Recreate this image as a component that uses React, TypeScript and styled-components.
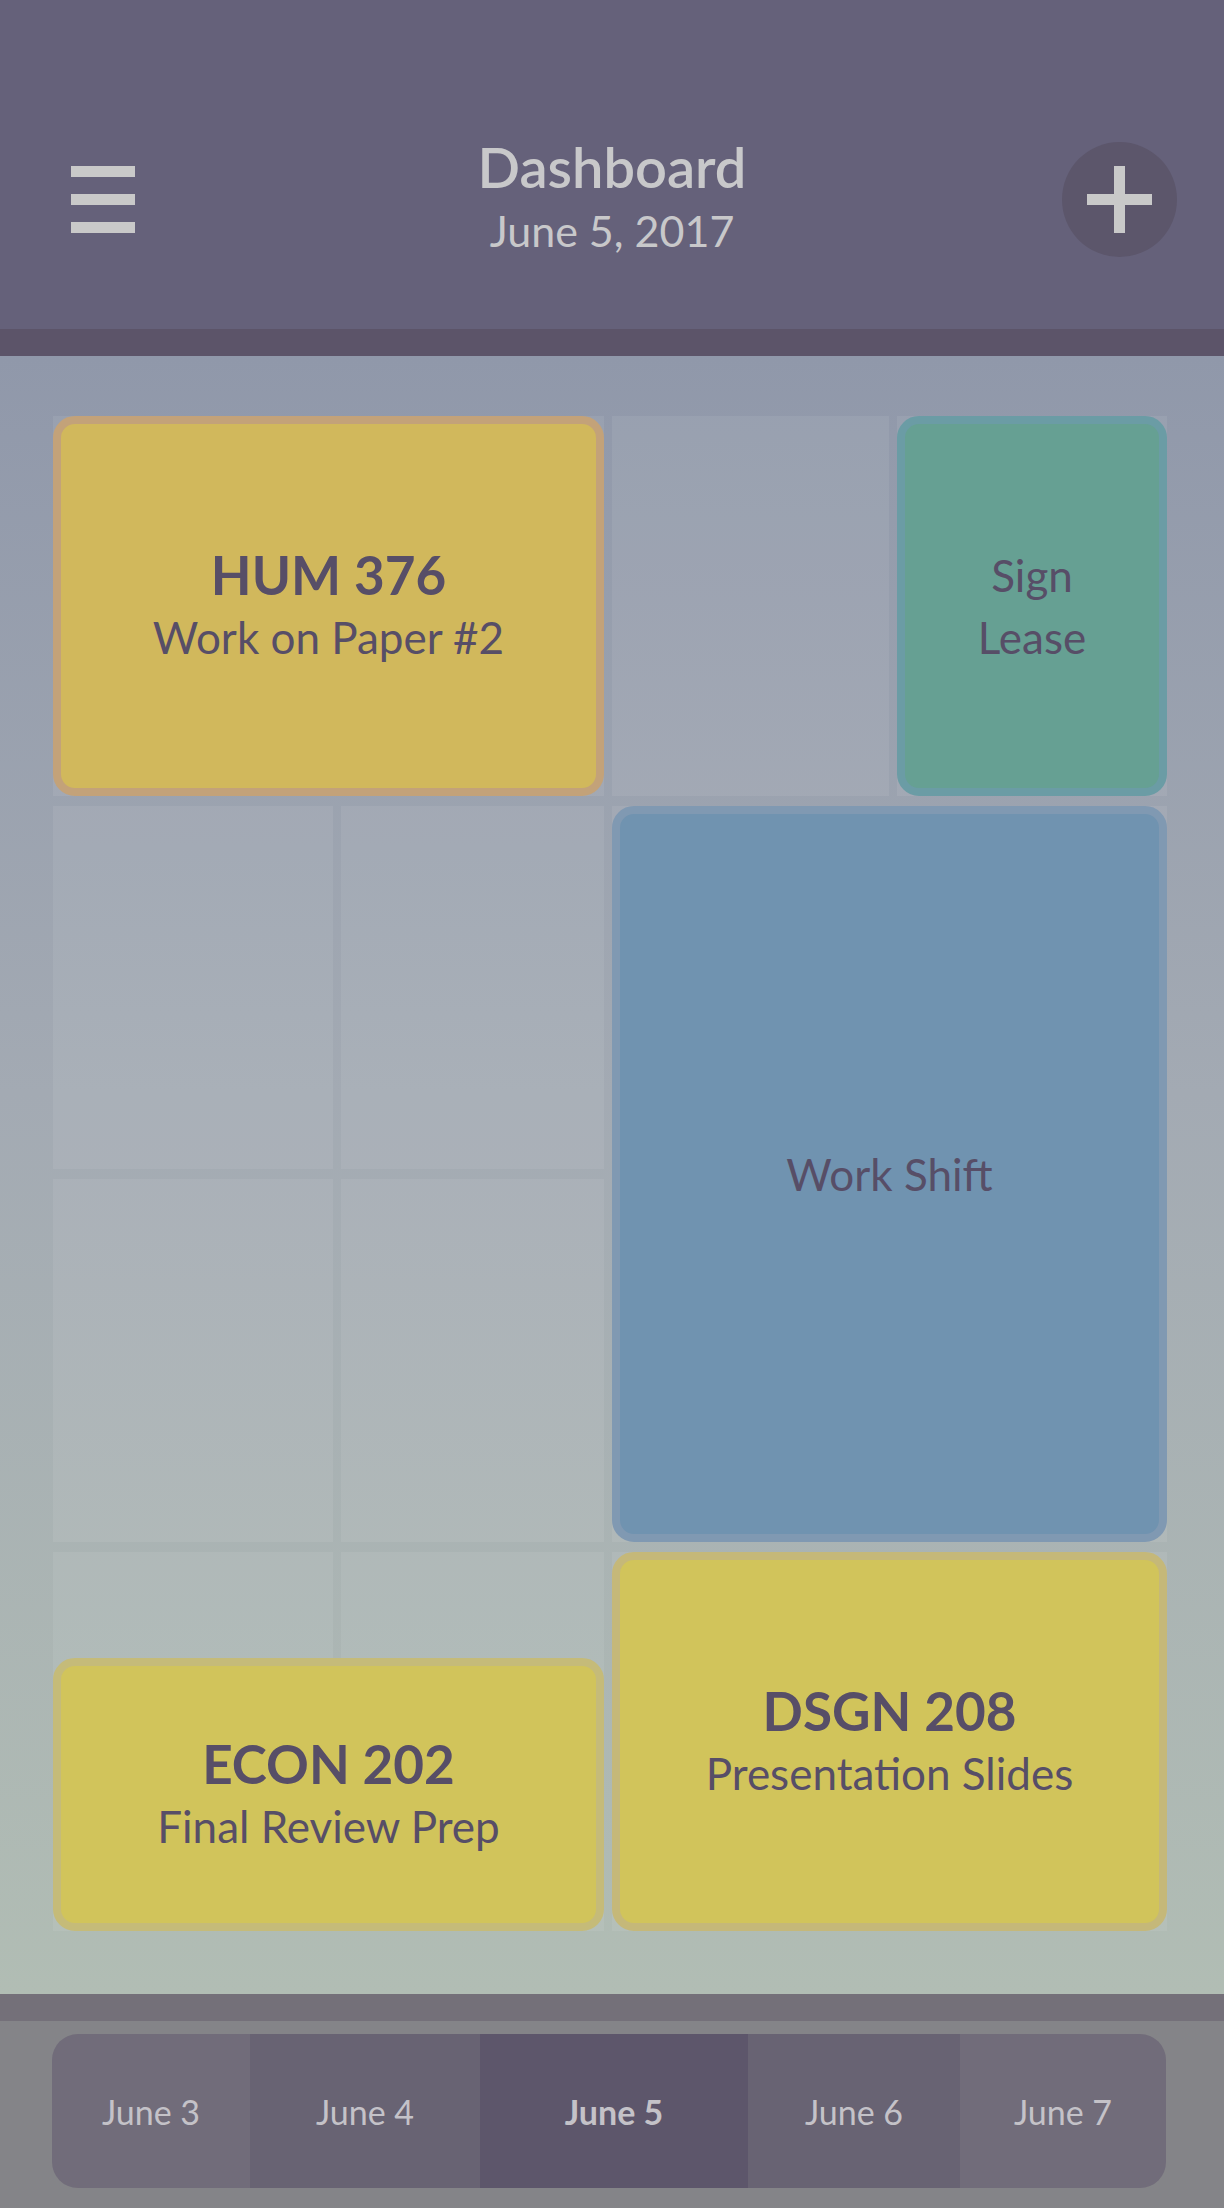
import React, { FC } from 'react';
import styled, { createGlobalStyle } from 'styled-components';

const GlobalStyle = createGlobalStyle`
  html, body {
    margin: 0;
    padding: 0;
  }

  body {
    font-family: Lato, 'Noto Sans', 'Liberation Sans', sans-serif;
    background: #848488;
  }

  * {
    box-sizing: border-box;
  }
`;

const Screen = styled.div`
  width: 1224px;
  height: 2208px;
  display: flex;
  flex-flow: column nowrap;
  overflow: hidden;
`;

// Cabecera
const Header = styled.header`
  background-color: #65617a;
  height: 329px;
  display: flex;
  flex-flow: column nowrap;
`;

const StatusBar = styled.div`
  height: 70px;
`;

const NavBar = styled.nav`
  flex: 1;
  display: grid;
  grid-template-columns: 1fr auto 1fr;
  align-items: center;
  padding: 0 47px;
`;

const MenuButton = styled.button`
  justify-self: start;
  margin-left: 24px;
  display: flex;
  flex-flow: column nowrap;
  gap: 17px;
  padding: 0;
  border: 0;
  background: none;
  width: 64px;
`;

const MenuBar = styled.span`
  display: block;
  height: 11px;
  width: 100%;
  background-color: #c9c9c9;
`;

const TitleBlock = styled.div`
  display: flex;
  flex-flow: column nowrap;
  align-items: center;
  color: #c8c8ca;
  padding-bottom: 4px;
`;

const Title = styled.h1`
  margin: 0;
  font-size: 56px;
  line-height: 60px;
  font-weight: 600;
`;

const Subtitle = styled.p`
  margin: 6px 0 0;
  font-size: 43px;
  line-height: 56px;
  font-weight: 400;
`;

const AddButton = styled.button`
  justify-self: end;
  width: 115px;
  height: 115px;
  border-radius: 50%;
  border: 0;
  padding: 0;
  background-color: #5c566b;
  display: flex;
  align-items: center;
  justify-content: center;
`;

const Strip = styled.div<{ $color: string }>`
  height: 27px;
  background-color: ${(p) => p.$color};
`;

// Calendario
const Main = styled.main`
  height: 1638px;
  padding: 60px 0 0 53px;
  background: linear-gradient(180deg, #9098aa 0%, #a3aab3 45%, #b1bdb4 100%);
`;

const Grid = styled.div`
  height: 1515px;
  display: grid;
  grid-template-columns: 280px 263px 277px 270px;
  grid-template-rows: 380px 363px 363px 379px;
  gap: 10px 8px;
`;

const Cell = styled.div<{ $col: number; $row: number }>`
  grid-column: ${(p) => p.$col};
  grid-row: ${(p) => p.$row};
  background-color: rgba(255, 255, 255, 0.07);
`;

const EventCard = styled.div<{
  $col: string;
  $row: string;
  $fill: string;
  $edge: string;
  $offset?: number;
}>`
  grid-column: ${(p) => p.$col};
  grid-row: ${(p) => p.$row};
  margin-top: ${(p) => p.$offset || 0}px;
  background-color: ${(p) => p.$fill};
  border: 8px solid ${(p) => p.$edge};
  border-radius: 22px;
  display: flex;
  flex-flow: column nowrap;
  align-items: center;
  justify-content: center;
  text-align: center;
  color: #574e67;
  z-index: 1;
`;

const EventTitle = styled.div`
  font-size: 53px;
  line-height: 62px;
  font-weight: 700;
`;

const EventText = styled.div`
  font-size: 44px;
  line-height: 62px;
  font-weight: 400;
`;

// Pie
const Footer = styled.footer`
  flex: 1;
  background-color: #848488;
  padding: 13px 58px 0 52px;
`;

const DayTabs = styled.div`
  display: flex;
  flex-flow: row nowrap;
  height: 154px;
  border-radius: 26px;
  overflow: hidden;
`;

const DayTab = styled.button<{ $width: number; $tone: string; $active?: boolean }>`
  width: ${(p) => p.$width}px;
  border: 0;
  padding: 0;
  background-color: ${(p) => p.$tone};
  color: #c4c2c8;
  font-family: inherit;
  font-size: 34px;
  font-weight: ${(p) => (p.$active ? 700 : 400)};
  display: flex;
  align-items: center;
  justify-content: center;
`;

const DAYS = [
  { label: 'June 3', width: 198, tone: '#716c7a' },
  { label: 'June 4', width: 230, tone: '#686373' },
  { label: 'June 5', width: 268, tone: '#5d566b', active: true },
  { label: 'June 6', width: 212, tone: '#686373' },
  { label: 'June 7', width: 206, tone: '#716c7a' },
];

const cells: { col: number; row: number }[] = [];
for (let r = 1; r <= 4; r++) {
  for (let c = 1; c <= 4; c++) {
    cells.push({ col: c, row: r });
  }
}

const App: FC = () => {
  return (
    <Screen>
      <GlobalStyle />
      <Header>
        <StatusBar />
        <NavBar>
          <MenuButton aria-label='Menu'>
            <MenuBar />
            <MenuBar />
            <MenuBar />
          </MenuButton>
          <TitleBlock>
            <Title>Dashboard</Title>
            <Subtitle>June 5, 2017</Subtitle>
          </TitleBlock>
          <AddButton aria-label='Add'>
            <svg width='66' height='67' viewBox='0 0 66 67'>
              <rect x='0' y='28' width='65' height='11' fill='#c9c9c9' />
              <rect x='27' y='0' width='11' height='67' fill='#c9c9c9' />
            </svg>
          </AddButton>
        </NavBar>
      </Header>
      <Strip $color='#5c5469' />
      <Main>
        <Grid>
          {cells.map((cell) => (
            <Cell key={`cell-${cell.col}-${cell.row}`} $col={cell.col} $row={cell.row} />
          ))}
          <EventCard $col='1 / 3' $row='1' $fill='#d1b85c' $edge='#c3a279'>
            <EventTitle>HUM 376</EventTitle>
            <EventText>Work on Paper #2</EventText>
          </EventCard>
          <EventCard $col='4' $row='1' $fill='#66a093' $edge='#6b9ca5'>
            <EventText>
              Sign
              <br />
              Lease
            </EventText>
          </EventCard>
          <EventCard $col='3 / 5' $row='2 / 4' $fill='#7093b0' $edge='#8099b2'>
            <EventText>Work Shift</EventText>
          </EventCard>
          <EventCard $col='1 / 3' $row='4' $fill='#d1c45b' $edge='#c5bb79' $offset={106}>
            <EventTitle>ECON 202</EventTitle>
            <EventText>Final Review Prep</EventText>
          </EventCard>
          <EventCard $col='3 / 5' $row='4' $fill='#d1c45b' $edge='#c5b879'>
            <EventTitle>DSGN 208</EventTitle>
            <EventText>Presentation Slides</EventText>
          </EventCard>
        </Grid>
      </Main>
      <Strip $color='#747079' />
      <Footer>
        <DayTabs>
          {DAYS.map((day) => (
            <DayTab key={day.label} $width={day.width} $tone={day.tone} $active={day.active}>
              {day.label}
            </DayTab>
          ))}
        </DayTabs>
      </Footer>
    </Screen>
  );
};

export default App;
